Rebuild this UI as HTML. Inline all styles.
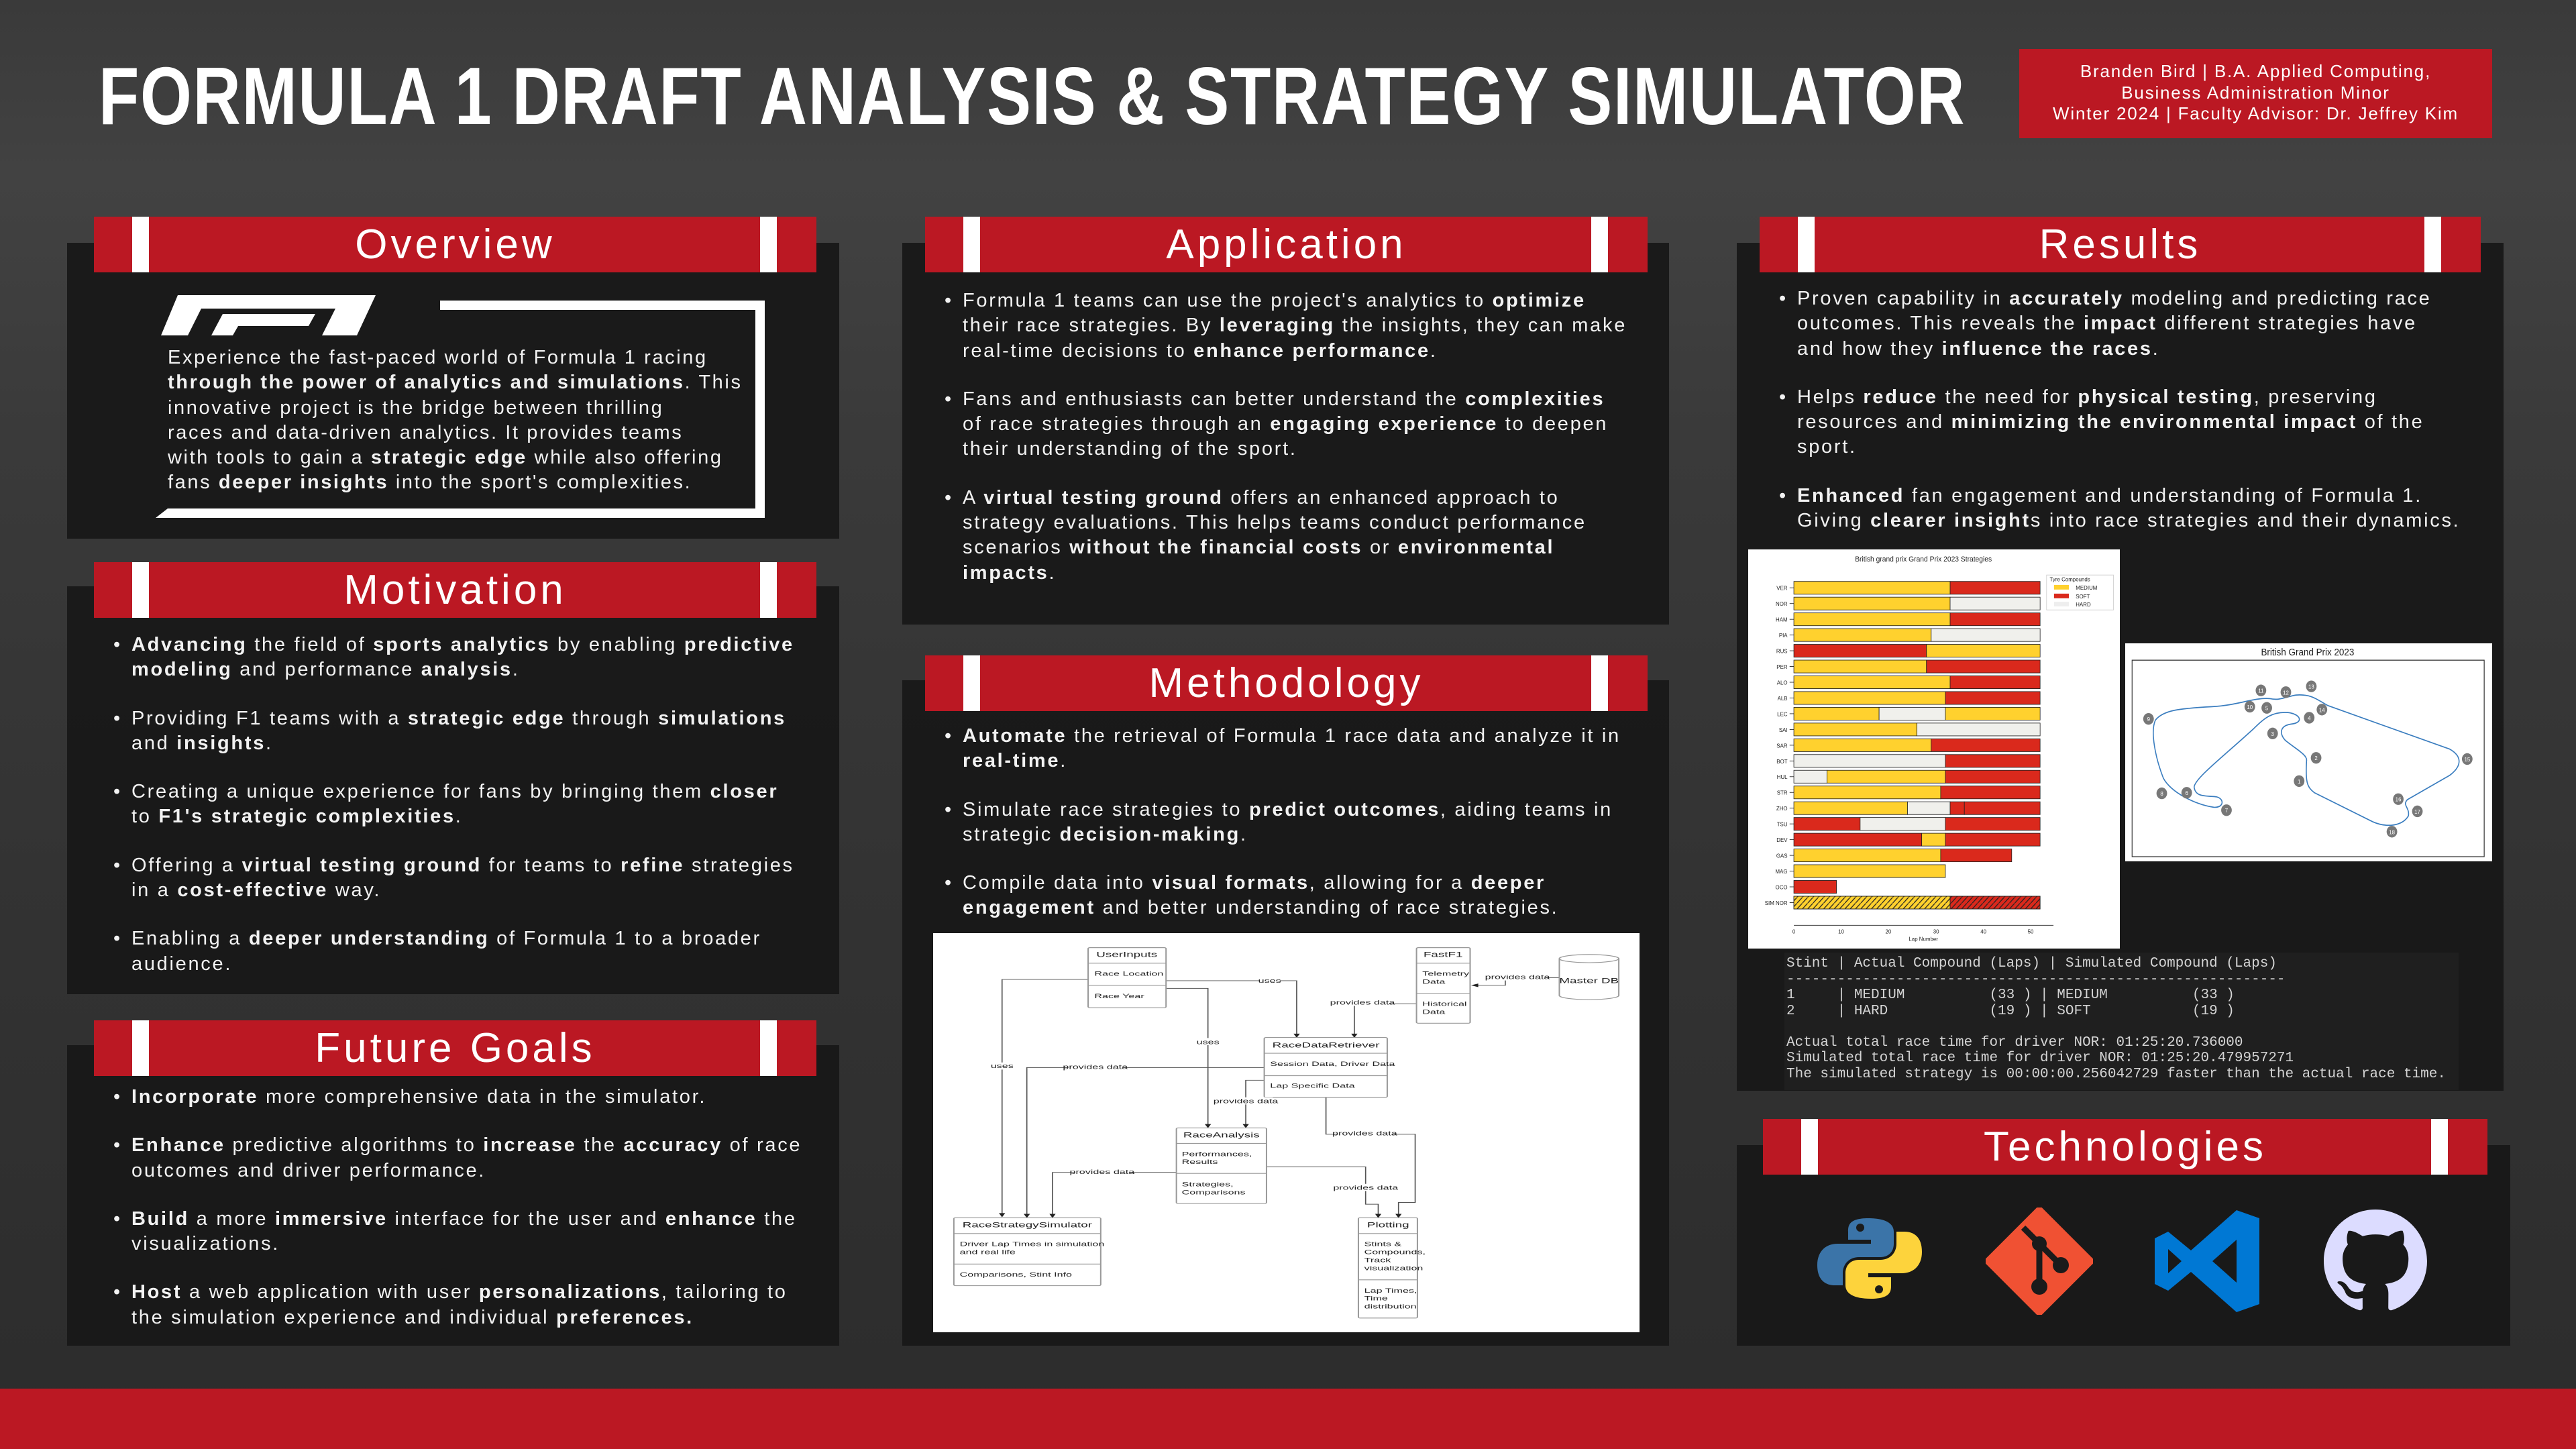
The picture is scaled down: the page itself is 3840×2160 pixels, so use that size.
<!DOCTYPE html>
<html><head><meta charset="utf-8"><style>
*{margin:0;padding:0;box-sizing:border-box}
body{width:3840px;height:2160px;overflow:hidden;position:relative;font-family:"Liberation Sans",sans-serif;color:#f2f2f2;
background:linear-gradient(180deg,#3a3a3a 0%,#424242 12%,#3a3a3a 30%,#333 60%,#2c2c2c 100%)}
.abs{position:absolute}
.panel{position:absolute;background:rgba(24,24,24,0.93)}
.hdr{position:absolute;height:83px;background:#bb1823;color:#fff;font-size:62px;letter-spacing:5px;text-align:center;line-height:83px}
.hdr:before,.hdr:after{content:"";position:absolute;top:0;width:25px;height:83px;background:#fff}
.hdr:before{left:57px}.hdr:after{right:59px}
.list{position:absolute;font-size:29px;line-height:37.3px;letter-spacing:2.7px;white-space:nowrap}
.list div{position:relative;margin-bottom:35px}
.list div:before{content:"•";position:absolute;left:-27px;top:0}
b{font-weight:700}
.term{position:absolute;font-family:"Liberation Mono",monospace;font-size:21px;line-height:23.5px;color:#d4d4d4;white-space:pre}
</style></head><body>

<!-- title -->
<div class="abs" style="left:147px;top:78px;font-size:122px;font-weight:700;color:#fff;white-space:nowrap;transform:scaleX(0.81);transform-origin:left top;letter-spacing:2px;line-height:130px">FORMULA 1 DRAFT ANALYSIS &amp; STRATEGY SIMULATOR</div>
<div class="abs" style="left:3010px;top:73px;width:705px;height:133px;background:#bb1823;color:#fff;font-size:26px;text-align:center;line-height:31.5px;padding-top:18px;letter-spacing:1.8px;white-space:nowrap">Branden Bird | B.A. Applied Computing,<br>Business Administration Minor<br>Winter 2024 | Faculty Advisor: Dr. Jeffrey Kim</div>

<!-- column 1 -->
<div class="panel" style="left:100px;top:362px;width:1151px;height:441px"></div>
<div class="hdr" style="left:140px;top:323px;width:1077px">Overview</div>
<svg class="abs" style="left:220px;top:430px" width="960" height="350" viewBox="0 0 960 350">
<path d="M20 70 L45 10 L300 10 L290 30 L80 30 L60 70 Z M95 70 L112 38 L250 38 L240 56 L135 56 L127 70 Z M260 70 L290 10 L340 10 L312 70 Z" fill="#fff"/>
<text x="277" y="68" font-size="10" fill="#fff" font-family="Liberation Sans">TM</text>
<path d="M436 18 L920 18 L920 342 L12 342 L30 328 L906 328 L906 32 L436 32 Z" fill="#fff"/>
</svg>
<div class="abs" style="left:250px;top:515px;font-size:29px;line-height:37.3px;letter-spacing:2.6px;white-space:nowrap">Experience the fast-paced world of Formula 1 racing<br><b>through the power of analytics and simulations</b>. This<br>innovative project is the bridge between thrilling<br>races and data-driven analytics. It provides teams<br>with tools to gain a <b>strategic edge</b> while also offering<br>fans <b>deeper insights</b> into the sport's complexities.</div>

<div class="panel" style="left:100px;top:874px;width:1151px;height:608px"></div>
<div class="hdr" style="left:140px;top:838px;width:1077px">Motivation</div>
<div class="list" style="left:196px;top:943px">
<div><b>Advancing</b> the field of <b>sports analytics</b> by enabling <b>predictive</b><br><b>modeling</b> and performance <b>analysis</b>.</div>
<div>Providing F1 teams with a <b>strategic edge</b> through <b>simulations</b><br>and <b>insights</b>.</div>
<div>Creating a unique experience for fans by bringing them <b>closer</b><br>to <b>F1's strategic complexities</b>.</div>
<div>Offering a <b>virtual testing ground</b> for teams to <b>refine</b> strategies<br>in a <b>cost-effective</b> way.</div>
<div>Enabling a <b>deeper understanding</b> of Formula 1 to a broader<br>audience.</div>
</div>

<div class="panel" style="left:100px;top:1558px;width:1151px;height:448px"></div>
<div class="hdr" style="left:140px;top:1521px;width:1077px">Future Goals</div>
<div class="list" style="left:196px;top:1617px">
<div><b>Incorporate</b> more comprehensive data in the simulator.</div>
<div><b>Enhance</b> predictive algorithms to <b>increase</b> the <b>accuracy</b> of race<br>outcomes and driver performance.</div>
<div><b>Build</b> a more <b>immersive</b> interface for the user and <b>enhance</b> the<br>visualizations.</div>
<div><b>Host</b> a web application with user <b>personalizations</b>, tailoring to<br>the simulation experience and individual <b>preferences.</b></div>
</div>

<!-- column 2 -->
<div class="panel" style="left:1345px;top:362px;width:1143px;height:569px"></div>
<div class="hdr" style="left:1379px;top:323px;width:1077px">Application</div>
<div class="list" style="left:1435px;top:430px">
<div>Formula 1 teams can use the project's analytics to <b>optimize</b><br>their race strategies. By <b>leveraging</b> the insights, they can make<br>real-time decisions to <b>enhance performance</b>.</div>
<div>Fans and enthusiasts can better understand the <b>complexities</b><br>of race strategies through an <b>engaging experience</b> to deepen<br>their understanding of the sport.</div>
<div>A <b>virtual testing ground</b> offers an enhanced approach to<br>strategy evaluations. This helps teams conduct performance<br>scenarios <b>without the financial costs</b> or <b>environmental</b><br><b>impacts</b>.</div>
</div>

<div class="panel" style="left:1345px;top:1014px;width:1143px;height:992px"></div>
<div class="hdr" style="left:1379px;top:977px;width:1077px">Methodology</div>
<div class="list" style="left:1435px;top:1079px">
<div><b>Automate</b> the retrieval of Formula 1 race data and analyze it in<br><b>real-time</b>.</div>
<div>Simulate race strategies to <b>predict outcomes</b>, aiding teams in<br>strategic <b>decision-making</b>.</div>
<div>Compile data into <b>visual formats</b>, allowing for a <b>deeper</b><br><b>engagement</b> and better understanding of race strategies.</div>
</div>
<svg class="abs" style="left:1391px;top:1391px;background:#fff" width="1053" height="595" viewBox="0 0 1568 1568" preserveAspectRatio="none" font-family="Liberation Sans" fill="none" stroke="#333" stroke-width="3">
<g stroke="#555" stroke-width="2.5">
<path d="M344 182 H153 V1110"/><path d="M517 187 H807 V405"/><path d="M517 217 H610 V760"/>
<path d="M1073 278 H935 V405"/><path d="M1390 175 H1270 V205 H1200"/>
<path d="M735 528 H208 V1113"/><path d="M735 578 H694 V760"/>
<path d="M872 645 V790 H1070 V1058 H1033 V1113"/><path d="M740 918 H960 V1065 H988 V1113"/><path d="M540 940 H265 V1113"/>
</g>
<g fill="#222" stroke="none">
<path d="M146 1100 L160 1100 L153 1116 Z"/><path d="M800 395 L814 395 L807 411 Z"/><path d="M603 750 L617 750 L610 766 Z"/>
<path d="M928 395 L942 395 L935 411 Z"/><path d="M1210 198 L1210 212 L1194 205 Z"/><path d="M201 1103 L215 1103 L208 1119 Z"/>
<path d="M687 750 L701 750 L694 766 Z"/><path d="M1026 1103 L1040 1103 L1033 1119 Z"/><path d="M981 1103 L995 1103 L988 1119 Z"/><path d="M258 1103 L272 1103 L265 1119 Z"/>
</g>
<g stroke="#999" fill="#fff">
<rect x="344" y="57" width="173" height="236" rx="4"/><rect x="1073" y="57" width="119" height="297" rx="4"/>
<rect x="735" y="410" width="273" height="235" rx="4"/><rect x="540" y="765" width="200" height="297" rx="4"/>
<rect x="46" y="1118" width="326" height="267" rx="4"/><rect x="944" y="1118" width="131" height="394" rx="4"/>
<path d="M1390 100 V245 A66 16 0 0 0 1522 245 V100 A66 16 0 0 0 1390 100 A66 16 0 0 0 1522 100"/>
<path d="M344 118 H517 M344 205 H517 M1073 118 H1192 M1073 237 H1192 M735 472 H1008 M735 560 H1008 M540 826 H740 M540 944 H740 M46 1180 H372 M46 1300 H372 M944 1180 H1075 M944 1362 H1075"/>
</g>
<g fill="#fff" stroke="none"><rect x="725" y="172" width="45" height="28"/><rect x="585" y="412" width="50" height="28"/><rect x="128" y="508" width="50" height="28"/><rect x="893" y="258" width="120" height="28"/><rect x="1237" y="158" width="120" height="28"/><rect x="300" y="510" width="120" height="28"/><rect x="634" y="645" width="120" height="28"/><rect x="898" y="772" width="120" height="28"/><rect x="900" y="985" width="120" height="28"/><rect x="315" y="924" width="120" height="28"/></g>
<g fill="#222" stroke="none" font-size="24">
<text x="430" y="94" text-anchor="middle" font-size="28">UserInputs</text><text x="358" y="168">Race Location</text><text x="358" y="255">Race Year</text>
<text x="1132" y="94" text-anchor="middle" font-size="28">FastF1</text><text x="1086" y="168">Telemetry</text><text x="1086" y="199">Data</text><text x="1086" y="286">Historical</text><text x="1086" y="318">Data</text>
<text x="1456" y="196" text-anchor="middle" font-size="28">Master DB</text>
<text x="872" y="449" text-anchor="middle" font-size="28">RaceDataRetriever</text><text x="748" y="522">Session Data, Driver Data</text><text x="748" y="608">Lap Specific Data</text>
<text x="640" y="802" text-anchor="middle" font-size="28">RaceAnalysis</text><text x="552" y="876">Performances,</text><text x="552" y="907">Results</text><text x="552" y="995">Strategies,</text><text x="552" y="1026">Comparisons</text>
<text x="209" y="1156" text-anchor="middle" font-size="28">RaceStrategySimulator</text><text x="59" y="1230">Driver Lap Times in simulation</text><text x="59" y="1261">and real life</text><text x="59" y="1349">Comparisons, Stint Info</text>
<text x="1010" y="1156" text-anchor="middle" font-size="28">Plotting</text><text x="957" y="1230">Stints &amp;</text><text x="957" y="1261">Compounds,</text><text x="957" y="1293">Track</text><text x="957" y="1324">visualization</text><text x="957" y="1412">Lap Times,</text><text x="957" y="1443">Time</text><text x="957" y="1475">distribution</text>
<text x="747" y="195" text-anchor="middle">uses</text><text x="610" y="436" text-anchor="middle">uses</text><text x="153" y="530" text-anchor="middle">uses</text>
<text x="953" y="281" text-anchor="middle">provides data</text><text x="1297" y="181" text-anchor="middle">provides data</text><text x="360" y="534" text-anchor="middle">provides data</text>
<text x="694" y="668" text-anchor="middle">provides data</text><text x="958" y="795" text-anchor="middle">provides data</text><text x="960" y="1008" text-anchor="middle">provides data</text><text x="375" y="946" text-anchor="middle">provides data</text>
</g>
</svg>

<!-- column 3 -->
<div class="panel" style="left:2589px;top:362px;width:1143px;height:1264px"></div>
<div class="hdr" style="left:2623px;top:323px;width:1075px">Results</div>
<div class="list" style="left:2679px;top:427px">
<div>Proven capability in <b>accurately</b> modeling and predicting race<br>outcomes. This reveals the <b>impact</b> different strategies have<br>and how they <b>influence the races</b>.</div>
<div>Helps <b>reduce</b> the need for <b>physical testing</b>, preserving<br>resources and <b>minimizing the environmental impact</b> of the<br>sport.</div>
<div><b>Enhanced</b> fan engagement and understanding of Formula 1.<br>Giving <b>clearer insight</b>s into race strategies and their dynamics.</div>
</div>

<svg class="abs" style="left:2606px;top:819px;background:#fff" width="554" height="595" viewBox="8 22 700 686" preserveAspectRatio="none" font-family="Liberation Sans" id="chart">
<defs><pattern id="hh" width="10" height="10" patternUnits="userSpaceOnUse"><path d="M0 10 L10 0" stroke="#222" stroke-width="1.5"/></pattern></defs>
<text x="338" y="43" font-size="13" text-anchor="middle" fill="#222">British grand prix Grand Prix 2023 Strategies</text>
<g id="bars" stroke="#222" stroke-width="1"></g>
<path d="M94 668 H583" stroke="#222"/>
<g font-size="10" fill="#222" text-anchor="middle"><text x="94" y="682">0</text><text x="183" y="682">10</text><text x="272" y="682">20</text><text x="362" y="682">30</text><text x="451" y="682">40</text><text x="540" y="682">50</text><text x="338" y="695">Lap Number</text></g>
<rect x="570" y="66" width="126" height="60" fill="#fff" stroke="#ccc"/>
<g font-size="10" fill="#222"><text x="576" y="77">Tyre Compounds</text><rect x="584" y="83" width="28" height="8" fill="#ffd12e"/><text x="625" y="91">MEDIUM</text><rect x="584" y="98" width="28" height="8" fill="#da291c"/><text x="625" y="106">SOFT</text><rect x="584" y="112" width="28" height="8" fill="#eee"/><text x="625" y="120">HARD</text></g>
</svg>
<script>
(function(){var M="#ffd12e",S="#da291c",H="#f0f0ec";
var d=[["VER",[[0,33,M],[33,52,S]]],["NOR",[[0,33,M],[33,52,H]]],["HAM",[[0,33,M],[33,52,S]]],["PIA",[[0,29,M],[29,52,H]]],["RUS",[[0,28,S],[28,52,M]]],["PER",[[0,28,M],[28,52,S]]],["ALO",[[0,33,M],[33,52,S]]],["ALB",[[0,32,M],[32,52,S]]],["LEC",[[0,18,M],[18,32,H],[32,52,M]]],["SAI",[[0,26,M],[26,52,H]]],["SAR",[[0,29,M],[29,52,S]]],["BOT",[[0,32,H],[32,52,S]]],["HUL",[[0,7,H],[7,32,M],[32,52,S]]],["STR",[[0,31,M],[31,52,S]]],["ZHO",[[0,24,M],[24,33,H],[33,36,S],[36,52,S]]],["TSU",[[0,14,S],[14,32,H],[32,52,S]]],["DEV",[[0,27,S],[27,32,M],[32,52,S]]],["GAS",[[0,31,M],[31,46,S]]],["MAG",[[0,32,M]]],["OCO",[[0,9,S]]],["SIM NOR",[[0,33,M],[33,52,S]]]];
var s="";d.forEach(function(r,i){var y=88+i*27.05;s+='<text x="82" y="'+(y+4)+'" font-size="10" text-anchor="end" fill="#222" stroke="none">'+r[0]+'</text><path d="M86 '+y+' H94" stroke="#222"/>';
r[1].forEach(function(b){var x=94+b[0]*8.92,w=(b[1]-b[0])*8.92;s+='<rect x="'+x+'" y="'+(y-11)+'" width="'+w+'" height="22" fill="'+b[2]+'"/>';if(i==20)s+='<rect x="'+x+'" y="'+(y-11)+'" width="'+w+'" height="22" fill="url(#hh)"/>';});});
document.getElementById("bars").innerHTML=s;})();
</script>

<svg class="abs" style="left:3168px;top:959px;background:#fff" width="547" height="325" viewBox="718 183 692 375" preserveAspectRatio="none" font-family="Liberation Sans">
<text x="1062" y="204" font-size="17" text-anchor="middle" fill="#222">British Grand Prix 2023</text>
<rect x="731" y="212" width="664" height="338" fill="none" stroke="#333" stroke-width="1.5"/>
<path d="M1060 385 C1058 420 1060 430 1075 440 L1185 490 C1210 500 1240 498 1252 480 C1255 465 1240 462 1250 452 L1330 410 C1352 395 1355 378 1330 365 L1100 290 C1080 280 1070 270 1040 272 C1020 275 1010 282 990 278 C960 276 930 290 880 292 C820 295 790 298 775 315 C765 335 775 380 790 415 C805 440 850 460 885 465 C905 466 905 450 890 447 C870 445 850 448 848 430 C850 415 900 380 960 330 C980 312 995 300 1025 302 C1050 305 1055 320 1030 322 C1010 325 1008 338 1020 350 C1040 365 1062 375 1060 385 Z" fill="none" stroke="#3a7dbf" stroke-width="2"/>
<g fill="#777"><circle cx="1046" cy="420" r="10"/><circle cx="1078" cy="380" r="10"/><circle cx="996" cy="338" r="10"/><circle cx="1065" cy="311" r="10"/><circle cx="985" cy="294" r="10"/><circle cx="834" cy="440" r="10"/><circle cx="909" cy="470" r="10"/><circle cx="787" cy="441" r="10"/><circle cx="762" cy="313" r="10"/><circle cx="953" cy="292" r="10"/><circle cx="974" cy="264" r="10"/><circle cx="1021" cy="267" r="10"/><circle cx="1069" cy="257" r="10"/><circle cx="1089" cy="297" r="10"/><circle cx="1363" cy="382" r="10"/><circle cx="1233" cy="451" r="10"/><circle cx="1269" cy="472" r="10"/><circle cx="1221" cy="507" r="10"/></g>
<g fill="#fff" font-size="10" text-anchor="middle"><text x="1046" y="424">1</text><text x="1078" y="384">2</text><text x="996" y="342">3</text><text x="1065" y="315">4</text><text x="985" y="298">5</text><text x="834" y="444">6</text><text x="909" y="474">7</text><text x="787" y="445">8</text><text x="762" y="317">9</text><text x="953" y="296">10</text><text x="974" y="268">11</text><text x="1021" y="271">12</text><text x="1069" y="261">13</text><text x="1089" y="301">14</text><text x="1363" y="386">15</text><text x="1233" y="455">16</text><text x="1269" y="476">17</text><text x="1221" y="511">18</text></g>
</svg>

<div class="abs" style="left:2660px;top:1420px;width:1005px;height:205px;background:#1f1f1f"></div>
<div class="term" style="left:2663px;top:1425px">Stint | Actual Compound (Laps) | Simulated Compound (Laps)
-----------------------------------------------------------
1     | MEDIUM          (33 ) | MEDIUM          (33 )
2     | HARD            (19 ) | SOFT            (19 )

Actual total race time for driver NOR: 01:25:20.736000
Simulated total race time for driver NOR: 01:25:20.479957271
The simulated strategy is 00:00:00.256042729 faster than the actual race time.</div>

<div class="panel" style="left:2589px;top:1707px;width:1153px;height:299px"></div>
<div class="hdr" style="left:2628px;top:1668px;width:1080px">Technologies</div>
<!-- python -->
<svg class="abs" style="left:2705px;top:1812px" width="164" height="128" viewBox="0 0 164 128">
<path d="M80 4 C50 4 50 16 50 24 V36 H84 V42 H34 C18 42 4 52 4 74 C4 96 16 104 30 104 H42 V86 C42 72 52 62 66 62 H98 C110 62 118 54 118 42 V24 C118 12 106 4 80 4 Z" fill="#3b74a8"/>
<circle cx="68" cy="18" r="6" fill="#1b1b1b"/>
<path d="M84 124 C114 124 114 112 114 104 V92 H80 V86 H130 C146 86 160 76 160 54 C160 32 148 24 134 24 H122 V42 C122 56 112 66 98 66 H66 C54 66 46 74 46 86 V104 C46 116 58 124 84 124 Z" fill="#fdd33c"/>
<circle cx="96" cy="110" r="6" fill="#1b1b1b"/>
</svg>
<!-- git -->
<svg class="abs" style="left:2960px;top:1800px" width="160" height="160" viewBox="0 0 160 160">
<path d="M80 2 L158 80 L80 158 L2 80 Z" fill="#f05133" stroke="#f05133" stroke-width="8" stroke-linejoin="round"/>
<path d="M56 30 L80 54 V118 M80 54 L112 86" stroke="#1b1b1b" stroke-width="9" fill="none"/>
<circle cx="80" cy="54" r="11" fill="#1b1b1b"/><circle cx="80" cy="118" r="12" fill="#1b1b1b"/><circle cx="112" cy="86" r="12" fill="#1b1b1b"/>
</svg>
<!-- vscode -->
<svg class="abs" style="left:3210px;top:1800px" width="160" height="160" viewBox="0 0 160 160">
<path d="M124 4 L158 16 V144 L124 156 L56 96 L22 124 L2 114 V46 L22 36 L56 64 Z M124 48 L88 80 L124 112 Z M22 62 V98 L42 80 Z" fill="#0078d4" fill-rule="evenodd"/>
</svg>
<!-- github -->
<svg class="abs" style="left:3464px;top:1803px" width="154" height="154" viewBox="0 0 16 16">
<path fill="#dcdcff" d="M8 0C3.580 0 0 3.58 0 8c0 3.54 2.29 6.53 5.47 7.59.4.07.55-.17.55-.38 0-.19-.01-.82-.01-1.49-2.01.37-2.530-.49-2.690-.94-.09-.23-.48-.94-.82-1.13-.28-.15-.68-.52-.01-.53.63-.01 1.08.58 1.23.82.72 1.21 1.87.87 2.33.66.07-.52.28-.87.51-1.07-1.78-.2-3.64-.89-3.64-3.95 0-.87.31-1.59.82-2.15-.08-.2-.36-1.02.08-2.12 0 0 .67-.21 2.2.82.64-.18 1.32-.27 2-.27.68 0 1.36.09 2 .27 1.53-1.04 2.2-.82 2.2-.82.44 1.1.16 1.92.08 2.12.51.56.82 1.27.82 2.15 0 3.07-1.87 3.75-3.65 3.95.29.25.54.73.54 1.48 0 1.07-.01 1.93-.01 2.2 0 .21.15.46.55.38A8.013 8.013 0 0016 8c0-4.42-3.58-8-8-8z"/>
</svg>

<!-- bottom bar -->
<div class="abs" style="left:0;top:2070px;width:3840px;height:90px;background:#bb1823"></div>
</body></html>
